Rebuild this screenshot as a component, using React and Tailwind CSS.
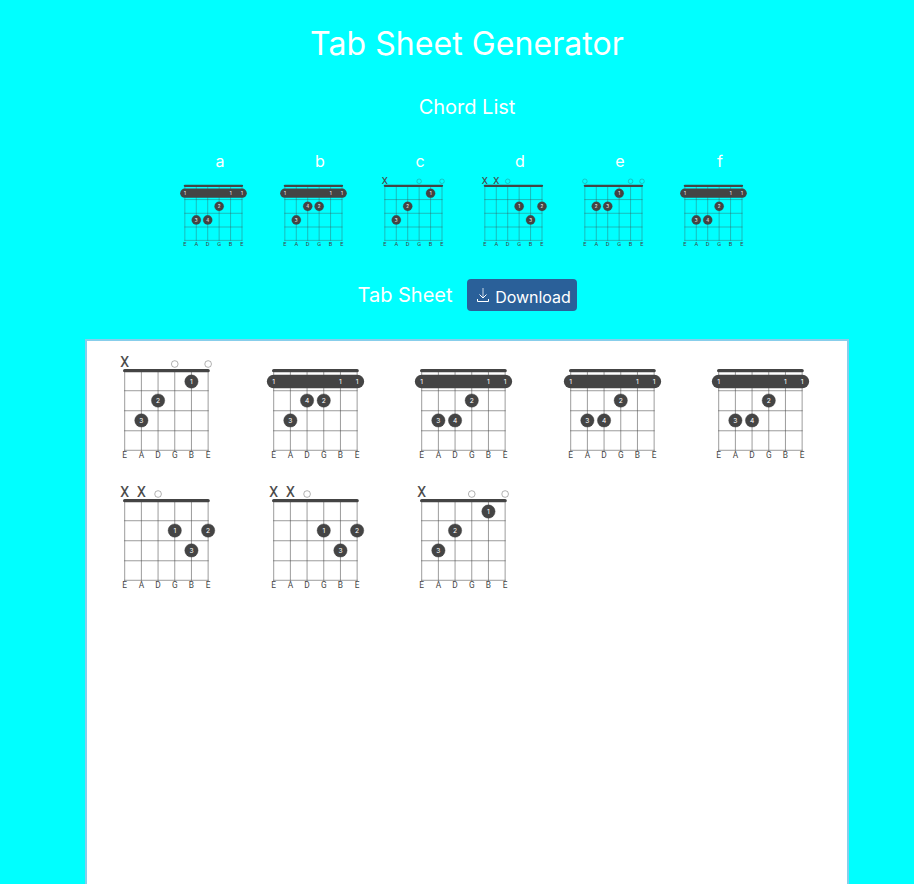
const STRINGS = ["E", "A", "D", "G", "B", "E"];
const FRET_Y = [-4, 6.5, 17.9, 29.8, 42];

// frets: -1 muted, 0 open. Barre chords hold every string on fret 1.
const CHORDS = {
  a: { frets: [1, 3, 3, 2, 1, 1], fingers: [1, 3, 4, 2, 1, 1], barre: true },
  b: { frets: [1, 3, 2, 2, 1, 1], fingers: [1, 3, 4, 2, 1, 1], barre: true },
  c: { frets: [-1, 3, 2, 0, 1, 0], fingers: [0, 3, 2, 0, 1, 0] },
  d: { frets: [-1, -1, 0, 2, 3, 2], fingers: [0, 0, 0, 1, 3, 2] },
  e: { frets: [0, 2, 2, 1, 0, 0], fingers: [0, 2, 3, 1, 0, 0] },
  f: { frets: [1, 3, 3, 2, 1, 1], fingers: [1, 3, 4, 2, 1, 1], barre: true },
};
const LIST = ["a", "b", "c", "d", "e", "f"];
const SHEET = ["c", "b", "a", "f", "a", "d", "d", "c"];

function Chord({ name, className }) {
  const { frets, fingers, barre } = CHORDS[name];
  return (
    <svg viewBox="0 0 80 70" preserveAspectRatio="xMinYMin meet" className={className}>
      <g transform="translate(13, 13)">
        <path
          stroke="#444"
          strokeWidth="0.32"
          strokeLinecap="square"
          d="M0 0H50M0 12H50M0 24H50M0 36H50M0 47.7H50M0 0V47.7M10 0V47.7M20 0V47.7M30 0V47.7M40 0V47.7M50 0V47.7"
        />
        <path stroke="#444" strokeWidth="2" strokeLinecap="round" d="M0 0H50" />
        {STRINGS.map((s, i) => (
          <text key={i} x={i * 10} y="52.6" fontSize="5" fill="#444" textAnchor="middle" className="font-[Roboto,sans-serif]">
            {s}
          </text>
        ))}
        {barre && <rect x="-4.1" y="2.4" width="58.3" height="8.1" rx="4.05" fill="#444" />}
        {frets.map((f, i) => {
          const x = i * 10;
          if (f === -1)
            return (
              <text key={i} x={x} y="-2" fontSize="8.4" fill="#444" stroke="#444" strokeWidth="0.12" textAnchor="middle" className="font-[Roboto,sans-serif]">
                X
              </text>
            );
          if (f === 0)
            return <circle key={i} cx={x} cy={-4} r="2" fill="none" stroke="#444" strokeWidth="0.25" />;
          return (
            <g key={i}>
              {!(barre && f === 1) && (
                <circle cx={x} cy={FRET_Y[f]} r="4" fill="#444" stroke="#444" strokeWidth="0.25" />
              )}
              <text x={x} y={FRET_Y[f] + 1.4} fontSize="4" fill="#fff" textAnchor="middle">
                {fingers[i]}
              </text>
            </g>
          );
        })}
      </g>
    </svg>
  );
}

function DownloadIcon() {
  return (
    <svg viewBox="0 0 16 16" className="h-4 w-4" fill="none" stroke="white">
      <path d="M8 1V11" strokeOpacity="0.75" />
      <path d="M4.5 7.5L8 11L11.5 7.5" />
      <path d="M2.5 12V14.5H13.5V12" />
    </svg>
  );
}

export default function App() {
  return (
    <div className="flex h-[884px] w-[914px] flex-col items-center overflow-hidden bg-[#00ffff] pl-5 font-['Inter',sans-serif] text-white">
      <h1 className="mt-6 text-[32px] leading-[40px] tracking-[0.07px]">Tab Sheet Generator</h1>
      <h2 className="mt-[29px] text-[20px] leading-7">Chord List</h2>
      <div className="mt-[29px] ml-1.5 flex">
        {LIST.map((n) => (
          <div key={n} className="flex w-[100px] flex-col text-center">
            <span className="h-[21px] text-base leading-[22px]">{n}</span>
            <Chord name={n} className="h-20 w-[100px]" />
          </div>
        ))}
      </div>
      <div className="mt-7 flex h-8 items-center gap-[14px]">
        <h2 className="text-[20px] leading-7">Tab Sheet</h2>
        <button className="flex h-8 w-[110px] items-center justify-center gap-1 rounded bg-[#2a6099] pl-[3px] text-base tracking-[-0.05px]">
          <DownloadIcon />
          <span className="pt-1">Download</span>
        </button>
      </div>
      <div className="mt-7 grid h-[600px] w-[764px] shrink-0 auto-rows-[130px] grid-cols-[repeat(5,148.5px)] border-2 border-[#87ceeb] bg-white pt-2 pl-4">
        {SHEET.map((n, i) => (
          <Chord key={i} name={n} className="w-[133.5px]" />
        ))}
      </div>
    </div>
  );
}
